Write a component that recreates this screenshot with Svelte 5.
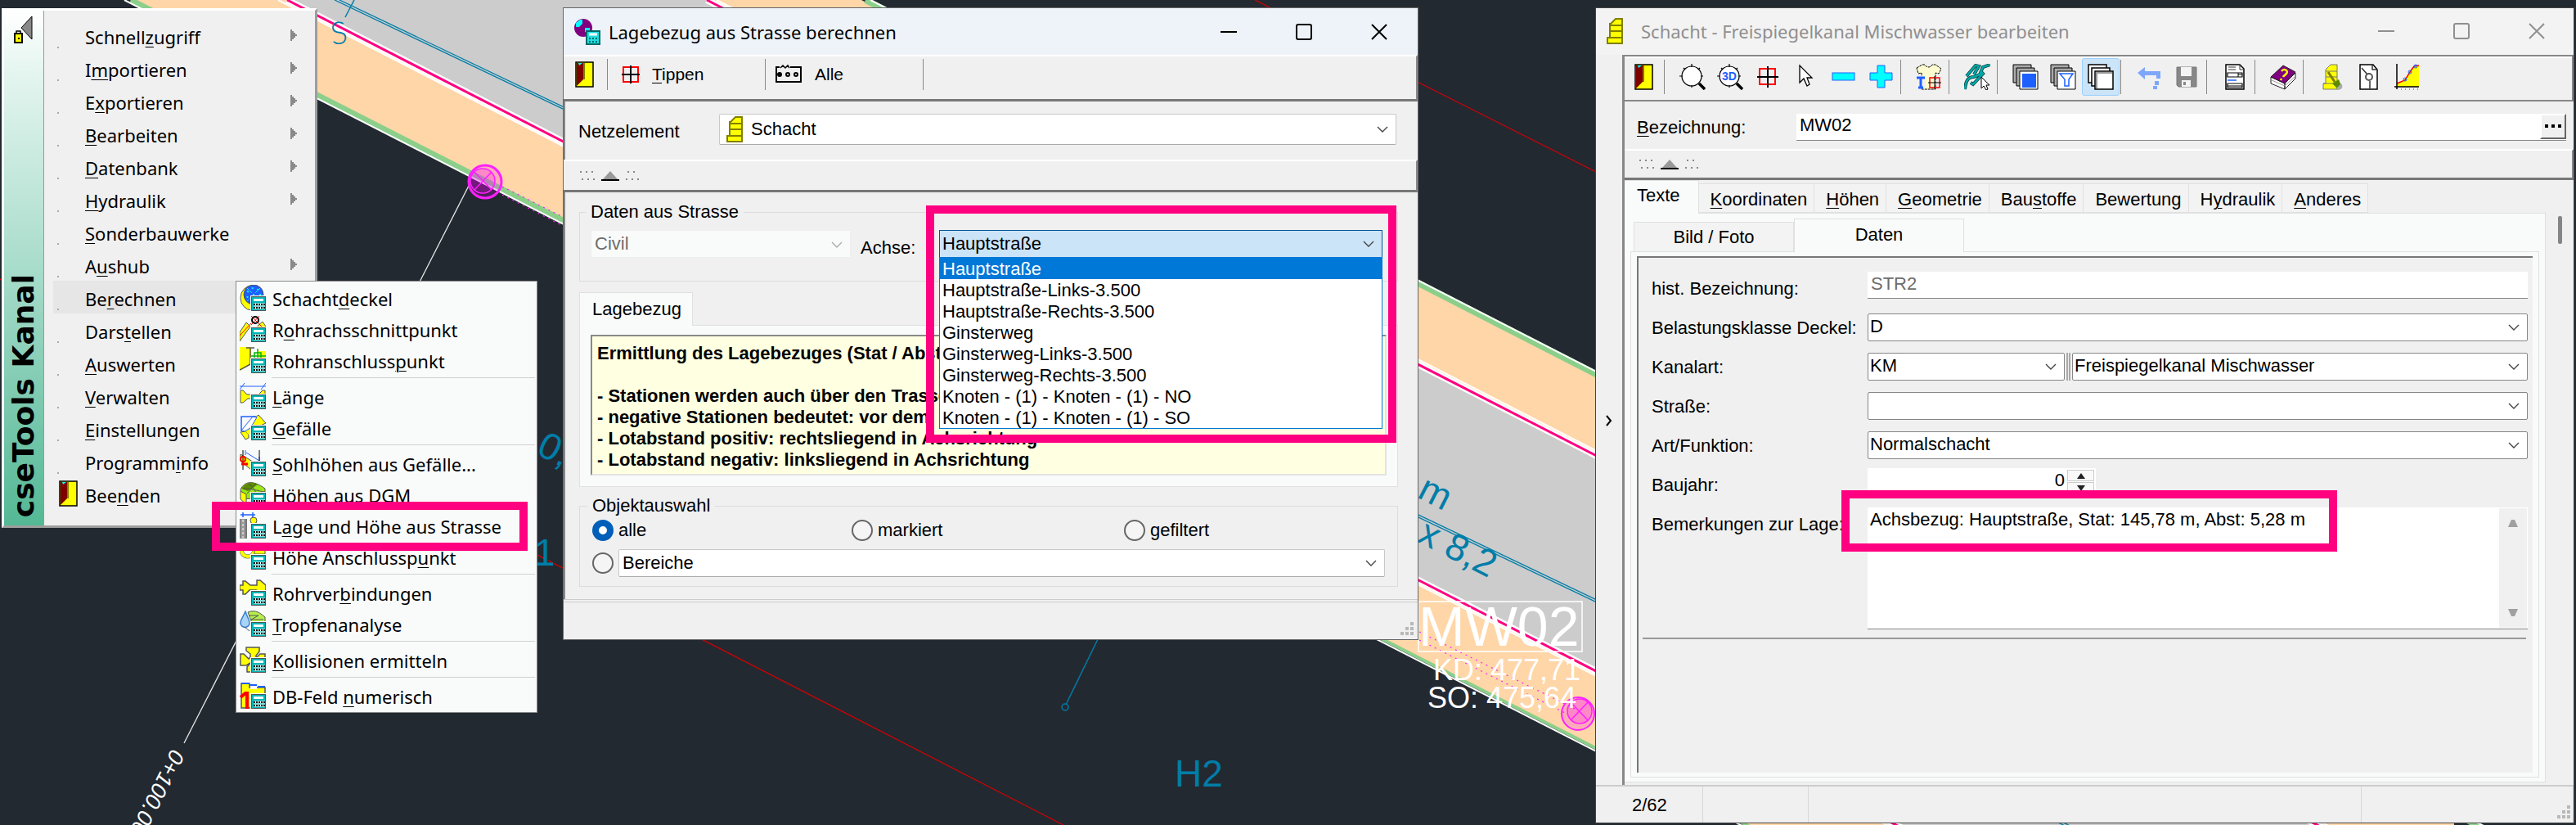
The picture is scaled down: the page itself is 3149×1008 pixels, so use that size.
<script>
  const mainMenu = [
    { t: 'Schnell&zugriff', sub: true },
    { t: 'I&mportieren', sub: true },
    { t: 'E&xportieren', sub: true },
    { t: '&Bearbeiten', sub: true },
    { t: '&Datenbank', sub: true },
    { t: '&Hydraulik', sub: true },
    { t: '&Sonderbauwerke' },
    { t: 'A&ushub', sub: true },
    { t: 'Be&rechnen', active: true },
    { t: 'Dars&tellen' },
    { t: '&Auswerten' },
    { t: '&Verwalten' },
    { t: '&Einstellungen' },
    { t: 'Programm&info' },
    { t: 'Bee&nden', icon: 'door' }
  ];

  const subMenu = [
    { t: 'Schacht&deckel', icon: 'cover' },
    { t: 'R&ohrachsschnittpunkt', icon: 'axis' },
    { t: 'Rohranschluss&punkt', icon: 'joint' },
    null,
    { t: '&Länge', icon: 'length' },
    { t: '&Gefälle', icon: 'slope' },
    null,
    { t: '&Sohlhöhen aus Gefälle...', icon: 'invert' },
    { t: 'Höhen aus DGM', icon: 'terrain' },
    { t: 'L&age und Höhe aus Strasse', icon: 'road' },
    { t: 'Höhe Anschlussp&unkt', icon: 'ring' },
    null,
    { t: 'Rohrver&bindungen', icon: 'pipes' },
    { t: '&Tropfenanalyse', icon: 'drop' },
    null,
    { t: '&Kollisionen ermitteln', icon: 'cross' },
    null,
    { t: 'DB-Feld &numerisch', icon: 'field' }
  ];

  const axes = [
    'Hauptstraße',
    'Hauptstraße-Links-3.500',
    'Hauptstraße-Rechts-3.500',
    'Ginsterweg',
    'Ginsterweg-Links-3.500',
    'Ginsterweg-Rechts-3.500',
    'Knoten - (1) - Knoten - (1) - NO',
    'Knoten - (1) - Knoten - (1) - SO'
  ];

  const tools = [
    ['door', 'Beenden'], null,
    ['zoom', 'Zoom'], ['zoom3d', 'Zoom 3D'], ['target', 'Zentrieren'], ['cursor', 'Auswählen'],
    ['minus', 'Entfernen'], ['plus', 'Hinzufügen'], null,
    ['shirt', 'Beschriftung'], null,
    ['link', 'Verknüpfen'], null,
    ['stackBlue', 'Alle Objekte'], ['stackFilter', 'Gefilterte Objekte'], ['stack', 'Einzelobjekt'], null,
    ['undo', 'Rückgängig'], ['disk', 'Speichern'], null,
    ['report', 'Bericht'], null,
    ['book', 'Hilfe'], null,
    ['brush', 'Schacht darstellen'], ['sheet', 'Schachtblatt'], ['chart', 'Diagramm']
  ];

  const tabs = ['Texte', '&Koordinaten', '&Höhen', '&Geometrie', 'Bau&stoffe', 'Bewertung', 'H&ydraulik', '&Anderes'];
</script>

{#snippet mn(text)}{@const i = text.indexOf('&')}{#if i < 0}{text}{:else}{text.slice(0, i)}<u>{text[i + 1]}</u>{text.slice(i + 2)}{/if}{/snippet}

{#snippet calc()}
  <rect x="13" y="13" width="19" height="19" fill="#fff" />
  <rect x="14" y="14" width="18" height="18" fill="#555" />
  <rect x="15" y="15" width="16" height="16" fill="#00b4b4" />
  <rect x="17" y="17" width="12" height="3" fill="#fff" />
  <path d="M17 24h14M17 28h14" stroke="#fff" stroke-width="3" />
  <path d="M17 24h14M17 28h14" stroke="#111" stroke-width="2" stroke-dasharray="2 1" />
{/snippet}

{#snippet icon(name)}
  <svg class="ico" viewBox="0 0 32 32" aria-hidden="true">
    {#if name === 'door'}
      <rect x="5" y="1" width="21" height="30" fill="#ff0" stroke="#000" stroke-width="1.5" />
      <path d="M6 2h8v20l-8 8z" fill="#800000" />
      <path d="M8 2h5l-4 3z" fill="#0ff" />
      <path d="M15 2v20" stroke="#000" />
    {:else if name === 'cover'}
      <ellipse cx="15" cy="16" rx="14" ry="15" fill="#ff0" stroke="#555" />
      <circle cx="17" cy="12" r="12" fill="#1e60ff" stroke="#555" />
      <path d="M9 4l16 16M25 4L9 20" stroke="#0ff" stroke-dasharray="3 2" />
      <circle cx="17" cy="12" r="8" fill="none" stroke="#0ff" stroke-width="2" stroke-dasharray="2 5" />
      {@render calc()}
    {:else if name === 'axis'}
      <path d="M0 20L8 8l5 5L0 31zM22 12l6-5 4 6v4h-8z" fill="#ff0" stroke="#555" />
      <path d="M0 24L14 9M14 0l14 14M24 0L14 11" stroke="red" fill="none" />
      <circle cx="19" cy="5" r="4" fill="none" stroke="#000" stroke-width="2" />
      {@render calc()}
    {:else if name === 'joint'}
      <path d="M0 0h14v21L0 29z" fill="#ff0" />
      <path d="M8 1h10M13 1v20L0 28" fill="none" stroke="#555" stroke-width="1.5" />
      <path d="M23 5h9v9h-9z" fill="#ff0" />
      <path d="M14 11h18M22 2v14M18 7h8v7h-8z" fill="none" stroke="#00b400" stroke-width="1.5" />
      {@render calc()}
    {:else if name === 'length'}
      <path d="M0 4h32M0 8l6-8M26 8l6-8" stroke="#1e60ff" fill="none" />
      <path d="M1 9h3l5 5h14l5-5h3v10H10l-6 5H1z" fill="#ff0" stroke="#555" />
      {@render calc()}
    {:else if name === 'slope'}
      <path d="M19 4l4-3 9 10-9 4h-5zM1 22l6-1 4 4v4l-4 2z" fill="#ff0" stroke="#555" />
      <path d="M6 20L21 6l4 9-14 10z" fill="#ff0" />
      <path d="M2 20L16 3l5 1-8 13-7 4z" fill="#fff" stroke="#1e60ff" />
      <path d="M2 21V3h18" stroke="#1e60ff" stroke-width="1.5" fill="none" />
      {@render calc()}
    {:else if name === 'invert'}
      <path d="M1 5l20 12-7 7L1 13z" fill="#ff0" stroke="#555" />
      <path d="M8 3l16 10M7 0v6M24 8v6" stroke="#1e60ff" fill="none" />
      <path d="M4 0v24M24 0v14" stroke="#000" />
      <circle cx="4" cy="11" r="3" fill="none" stroke="red" stroke-width="2" />
      <path d="M2 17h8" stroke="red" stroke-width="3" />
      {@render calc()}
    {:else if name === 'terrain'}
      <path d="M1 10C6 0 16-2 31 9v12H15L4 22z" fill="#9be51a" stroke="#555" />
      <path d="M2 9C8 1 16 0 22 4L10 12z" fill="#5c8a00" />
      <path d="M1 12l7 4v12L1 22z" fill="#ff0" stroke="#555" />
      <path d="M4 9c8-1 18 3 27 4M10 3c6 3 9 8 10 12M20 3L9 15" fill="none" stroke="#555" />
      {@render calc()}
    {:else if name === 'road'}
      <path d="M1 3h18M4 0v6M16 0v6" stroke="#1e60ff" stroke-width="1.5" />
      <rect y="8" width="9" height="24" fill="#999" />
      <path d="M0 8v24M8 8v24" stroke="#555" />
      <path d="M4 9v22" stroke="#fff" stroke-dasharray="3 2" />
      <circle cx="17" cy="10" r="4" fill="#ff0" stroke="#555" />
      {@render calc()}
    {:else if name === 'ring'}
      <circle cx="10" cy="8" r="8" fill="none" stroke="#555" stroke-width="5" />
      <circle cx="10" cy="8" r="8" fill="none" stroke="#ff0" stroke-width="4" />
      <path d="M18 4h13v9H18z" fill="#ff0" stroke="#555" />
      {@render calc()}
    {:else if name === 'pipes'}
      <path d="M0 7h4V2h3l6 5h8V1h4l7 6v8h-7l-5-2H12l-5 5H4v-5H0z" fill="#ff0" stroke="#555" stroke-width="1.5" />
      {@render calc()}
    {:else if name === 'drop'}
      <path d="M10 2c10-4 16 2 21 6v7H15z" fill="#b6f04a" stroke="#555" />
      <path d="M11 6h12l-9 5h15" fill="none" stroke="#555" />
      <path d="M7 1C4 8 1 11 1 15a5 5 0 0 0 11 0C12 11 9 8 7 1z" fill="#a8d4f8" stroke="#3a80d0" stroke-width="1.5" />
      <path d="M6 20l6 5" stroke="#555" />
      {@render calc()}
    {:else if name === 'cross'}
      <path d="M8 1h16v5l-4 5v3l5-5h6v14h-6l-5 2v6H9v-6l4-5-5 3H1V9h4l6 6 2-2V9L8 5z" fill="#ff0" stroke="#555" stroke-width="1.5" />
      {@render calc()}
    {:else if name === 'field'}
      <path d="M2 1h10v5h19v10h-8v15H2z" fill="#ff0" stroke="#555" stroke-width="1.5" />
      <path d="M2 1h10M12 3h9M22 5h9" stroke="#1e60ff" stroke-width="2" />
      <path d="M13 5h8v3h-8z" fill="#fff" />
      <path d="M1 18l6-5h2v19" fill="none" stroke="red" stroke-width="4" />
      {@render calc()}
    {:else if name === 'world'}
      <circle cx="11" cy="11" r="11" fill="#800080" />
      <path d="M2 10V5l5-4h3v5l-4 4zM13 11h6v5h-6z" fill="#0ff" />
      <rect x="14" y="14" width="18" height="18" fill="#006a6a" />
      <rect x="16" y="16" width="14" height="14" fill="#20dede" />
      <path d="M18 19h10" stroke="#fff" stroke-width="3" />
      <path d="M18 24h10M18 28h10" stroke="#006a6a" stroke-width="2" stroke-dasharray="2 2" />
    {:else if name === 'shaft'}
      <path d="M10 7l6-6h8v30H6v-7h3V7z" fill="#ff0" stroke="#808000" stroke-width="2" />
      <path d="M10 9h13M9 16h14M7 24h17" stroke="#808000" stroke-width="2" />
    {:else if name === 'tap'}
      <rect x="7" y="7" width="18" height="18" fill="none" stroke="red" stroke-width="2" />
      <path d="M16 5v22M5 16h22" stroke="#000" stroke-width="2" />
    {:else if name === 'all'}
      <path d="M5 7H1v18h30V7H18" fill="none" stroke="#000" stroke-width="2" />
      <path d="M6 8l3-3 3 3 3-3 2 3" fill="none" stroke="#000" stroke-width="1.5" />
      <circle cx="5" cy="16" r="3" />
      <circle cx="15" cy="16" r="2" fill="none" stroke="#000" stroke-width="2" />
      <circle cx="25" cy="16" r="2" fill="none" stroke="#000" stroke-width="2" />
    {:else if name === 'zoom' || name === 'zoom3d'}
      <circle cx="15" cy="15" r="12" fill="#fff" stroke="#000" stroke-width="1.2" />
      <path d="M15 0v4M0 15h4M26 15h3M15 26v3M5 5l2 2M25 5l-2 2" stroke="#000" stroke-width="1.2" />
      <path d="M24 24l7 7" stroke="#000" stroke-width="3.5" />
      {#if name === 'zoom3d'}<text x="6" y="20" class="t3d">3D</text>{/if}
    {:else if name === 'target'}
      <rect x="6" y="6" width="19" height="19" fill="none" stroke="red" stroke-width="2" />
      <path d="M16 3v26M3 16h26" stroke="#000" stroke-width="2" />
    {:else if name === 'cursor'}
      <path d="M9 2v21l5-5 4 9 3-2-3-8h6z" fill="#fff" stroke="#000" stroke-width="1.3" />
    {:else if name === 'minus'}
      <rect x="3" y="11" width="27" height="9" fill="#0ff" stroke="#1e60ff" />
    {:else if name === 'plus'}
      <path d="M12 2h9v9h9v9h-9v9h-9v-9H3v-9h9z" fill="#0ff" stroke="#1e60ff" />
    {:else if name === 'shirt'}
      <path d="M1 5L8 1h3c2 4 7 4 9 0h4l7 5-3 6-4-1v20H7V11l-4 1z" fill="#fdfbd0" stroke="#000" stroke-dasharray="3 1" />
      <path d="M0 15h12v14H0z" fill="#f0f0f0" />
      <path d="M1 17h10M6 16v13M3 29h6" stroke="#1e60ff" stroke-width="3" />
      <path d="M17 17h12v12H17z" fill="none" stroke="red" stroke-width="1.5" />
      <path d="M23 15v16M15 23h16" stroke="#000" />
    {:else if name === 'link'}
      <path d="M1 31c1-9 3-15 11-15l7-3 4-9 9-3M3 15L14 2l4 1-6 10M20 9l3 3-12 13-3-2" fill="none" stroke="#003c3c" stroke-width="4" />
      <path d="M1 31c1-9 3-15 11-15l7-3 4-9 9-3M3 15L14 2l4 1-6 10M20 9l3 3-12 13-3-2" fill="none" stroke="#00a8a8" stroke-width="2.5" />
      <path d="M21 16v14l3-3 3 5 2-1-2-5h4z" fill="#fff" stroke="#000" />
    {:else if name === 'stackBlue' || name === 'stackFilter'}
      <path d="M1 1h22v22H1z" fill="#aaa" stroke="#000" />
      <path d="M5 5h22v22H5z" fill="#aaa" stroke="#000" />
      <path d="M9 9h22v22H9z" fill="#fff" stroke="#000" />
      {#if name === 'stackBlue'}
        <rect x="12" y="12" width="17" height="17" fill="#1e60ff" />
      {:else}
        <path d="M12 12h16l-5 7v8h-5v-8z" fill="#fff" stroke="#1e60ff" stroke-width="1.5" />
      {/if}
    {:else if name === 'stack'}
      <path d="M1 1h22v22H1z" fill="#fff" stroke="#000" stroke-width="1.5" />
      <path d="M5 5h22v22H5z" fill="#fff" stroke="#000" stroke-width="1.5" />
      <path d="M9 9h22v22H9z" fill="#fff" stroke="#000" stroke-width="1.5" />
      <path d="M11 30V11h19" fill="none" stroke="#999" stroke-width="2" />
    {:else if name === 'undo'}
      <path d="M2 11l9-7v5h19v9h-5v-4H11v5z" fill="#7ea6fb" />
      <path d="M23 21h5v5h-5zM21 27h5v4h-5z" fill="#7ea6fb" />
    {:else if name === 'disk'}
      <path d="M4 4h24v24H6l-2-2z" fill="#888" stroke="#777" />
      <path d="M9 4h13v11H9zM10 20h11v8H10z" fill="#f4f4f4" />
      <path d="M12 22h3v4h-3z" fill="#888" />
    {:else if name === 'report'}
      <path d="M5 1h17l5 5v25H5z" fill="#fff" stroke="#000" stroke-width="1.5" />
      <path d="M22 1v6h5M8 4h9M8 7h9" fill="none" stroke="#333" />
      <path d="M7 11h18v5H7zM7 24h18v5H7z" fill="#fff" stroke="#000" stroke-width="1.2" />
      <path d="M20 11v5M20 13h5M7 27h18" stroke="#000" />
      <path d="M7 20h11" stroke="#1e60ff" stroke-width="1.5" />
    {:else if name === 'book'}
      <path d="M1 16l17 8v7L1 24zM18 24L31 11v7L18 31z" fill="#fff" stroke="#222" />
      <path d="M2 20l16 7 13-12" fill="none" stroke="#999" />
      <path d="M16 2l15 8-13 14L1 16z" fill="#800080" stroke="#222" />
      <path d="M14 9c3-4 9-1 6 3-2 2-3 2-4 4M14 18l-1 2" fill="none" stroke="#ff0" stroke-width="2.5" />
    {:else if name === 'brush'}
      <path d="M9 7l6-6h8v30H6v-7h3z" fill="#ff0" stroke="#777" />
      <path d="M9 9h14M9 16h14M6 24h16" stroke="#777" />
      <path d="M12 10l8 12" stroke="#808000" stroke-width="3" />
      <path d="M17 24l8-5 3 8-4 4z" fill="#5c8a00" />
      <path d="M23 29l5-5c3 4 1 8-5 8z" fill="#aaa" />
    {:else if name === 'sheet'}
      <path d="M5 1h16l5 6v24H5z" fill="#fff" stroke="#000" stroke-width="1.5" />
      <path d="M20 1v6h6M7 5l7 8M17 21v9" fill="none" stroke="#333" stroke-width="1.5" />
      <circle cx="16" cy="16" r="4" fill="none" stroke="#555" stroke-width="2" />
    {:else if name === 'chart'}
      <path d="M4 24l8-3 7-11 5-7 7-2v27H4z" fill="#ff0" />
      <path d="M4 24l10-4 6-10 5-7 6-1" fill="none" stroke="red" stroke-width="1.5" />
      <path d="M4 0v31M1 28h30" stroke="#000" stroke-width="1.5" />
      <path d="M9 31h22" stroke="#999" stroke-width="2" stroke-dasharray="1 4" />
      <circle cx="14" cy="19" r="2" fill="none" stroke="#1e60ff" />
      <circle cx="20" cy="10" r="2" fill="none" stroke="#1e60ff" />
      <circle cx="27" cy="3" r="2" fill="none" stroke="#1e60ff" />
    {/if}
  </svg>
{/snippet}

{#snippet chevron()}
  <svg class="chev" viewBox="0 0 14 9" aria-hidden="true"><path d="M1 1l6 6 6-6" fill="none" stroke="currentColor" stroke-width="1.4" /></svg>
{/snippet}

{#snippet combo(id, value, cls = '', disabled = false)}
  <span class="combo {cls}">
    <select {id} {disabled} aria-label={id}><option>{value}</option></select>
    {@render chevron()}
  </span>
{/snippet}

{#snippet caption()}
  <div class="caption">
    <button aria-label="Minimieren"><svg viewBox="0 0 20 20"><path d="M0 10h20" /></svg></button>
    <button aria-label="Maximieren"><svg viewBox="0 0 20 20"><rect x="1" y="1" width="18" height="18" rx="2" /></svg></button>
    <button aria-label="Schließen"><svg viewBox="0 0 20 20"><path d="M1 1l18 18M19 1L1 19" /></svg></button>
  </div>
{/snippet}

{#snippet grip()}
  <div class="gripbar">
    <svg viewBox="0 0 72 12" aria-hidden="true">
      <path d="M0 1h16M2 10h16M58 1h14M56 10h16" stroke="#888" stroke-width="2" stroke-dasharray="2 5" />
      <path d="M37 0l9 10H28z" fill="#999" />
      <path d="M26 11h22" stroke="#000" stroke-width="2" />
    </svg>
  </div>
{/snippet}

{#snippet sizer()}
  <svg class="sizer" viewBox="0 0 17 17" aria-hidden="true"><path d="M12 0h4v4h-4zM6 6h4v4H6zM12 6h4v4h-4zM0 12h4v4H0zM6 12h4v4H6zM12 12h4v4h-4z" fill="#b8b8b8" /></svg>
{/snippet}

<main class="desktop">
  <svg class="map" viewBox="0 0 3149 1008" preserveAspectRatio="xMinYMin slice" aria-label="Lageplan">
    <rect width="3149" height="1008" fill="#232931" />
    <path d="M159 0H1053L3000 998V1450L159 0z" fill="#ffd6a8" />
    <path d="M353 0H864L3000 1095V1358z" fill="#ccc" />
    <path d="M160 0L1688 779" stroke="#8bcf8b" stroke-width="7" />
    <path d="M1688 780L3149 1525" stroke="#8bcf8b" stroke-width="4" />
    <path d="M152 0L3149 1529" stroke="#fff" stroke-width="2" />
    <path d="M1058 0L3149 1070" stroke="#8bcf8b" stroke-width="8" />
    <path d="M1064 0L3149 1067" stroke="#fff" stroke-width="2" />
    <path d="M351 0L3149 1434" stroke="#fff" stroke-width="8" />
    <path d="M351 0L3149 1434" stroke="#ff0080" stroke-width="3" />
    <path d="M340 0L3149 1440" stroke="#fff" stroke-width="2" />
    <path d="M864 0L3149 1170" stroke="#fff" stroke-width="8" />
    <path d="M864 0L3149 1170" stroke="#ff0080" stroke-width="3" />
    <path d="M876 0L3149 1164" stroke="#fff" stroke-width="2" />
    <path d="M409 0L3149 1307M415 0L3149 1304" stroke="#007da8" stroke-width="1.3" />
    <path d="M433 0L422 21" stroke="#007da8" stroke-width="1.5" />
    <path d="M1534 0L1951 210M0 341L1300 1008" stroke="#d40000" stroke-width="1.3" />
    <path d="M574 225L225 908" stroke="#e8e8e8" stroke-width="1.3" />
    <path d="M1342 781L1303 861" stroke="#007da8" stroke-width="1.5" />
    <circle cx="1302" cy="864" r="4" fill="none" stroke="#007da8" stroke-width="1.5" />
    <path d="M614 228L690 266M614 238L690 277M1735 772L1929 868M1735 782L1915 872" stroke="#ff20ff" stroke-width="1.2" stroke-dasharray="2 5" />
    <g fill="#ff00ff" fill-opacity="0.2" stroke="#ff20ff">
      <circle cx="593" cy="222" r="20" stroke-width="3" />
      <circle cx="590" cy="221" r="15" stroke-width="1.5" />
      <path d="M580 210l21 22M601 210l-21 22" stroke-width="1.5" />
      <circle cx="1929" cy="872" r="20" stroke-width="2" />
      <circle cx="1931" cy="869" r="15" stroke-width="1.5" />
      <path d="M1920 858l21 22M1941 858l-21 22" stroke-width="1.5" />
    </g>
    <g fill="#007da8" font-size="46">
      <text transform="translate(406 55) rotate(-8)" font-size="38" font-family="Lato" font-weight="300">S</text>
      <text transform="translate(654 554) rotate(27)">0,</text>
      <text x="653" y="691">1</text>
      <text transform="translate(1731 607) rotate(27)">m</text>
      <text transform="translate(1731 661) rotate(27)">x 8,2</text>
      <text x="1436" y="961">H2</text>
    </g>
    <g fill="#fff">
      <rect x="1734" y="735" width="200" height="61" fill="none" stroke="#fff" stroke-width="1.5" />
      <text x="1734" y="789" font-size="68">MW02</text>
      <text x="1752" y="831" font-size="36">KD: 477,71</text>
      <text x="1745" y="865" font-size="36">SO: 475,64</text>
      <text transform="translate(210 914) rotate(117)" font-size="27" font-style="italic">0+100.00</text>
    </g>
  </svg>

  <nav class="mainmenu">
    <div class="strip">
      <svg class="lock" viewBox="0 0 24 34" aria-hidden="true">
        <path d="M22 1v28L9 15z" fill="#888" stroke="#000" />
        <path d="M3 22v-3h5v3" fill="none" stroke="#000" stroke-width="1.5" />
        <rect x="1" y="22" width="9" height="11" fill="#ff0" stroke="#000" stroke-width="2" />
        <rect x="5" y="27" width="2" height="2" />
      </svg>
      <span class="brand">cseTools Kanal</span>
    </div>
    <ul>
      {#each mainMenu as m}
        <li>
          <button class="mrow" class:active={m.active}>
            <span class="slot">{#if m.icon}{@render icon(m.icon)}{:else}<i class="dot"></i>{/if}</span>
            <span class="mtext">{@render mn(m.t)}</span>
            {#if m.sub}
              <svg class="arrow" viewBox="0 0 8 14" aria-hidden="true"><path d="M1 0v14M3 2v10M5 4v6M7 6v2" stroke="#222" /></svg>
            {/if}
          </button>
        </li>
      {/each}
    </ul>
  </nav>

  <section class="dialog">
    <header class="title">
      {@render icon('world')}
      <h1>Lagebezug aus Strasse berechnen</h1>
      {@render caption()}
    </header>
    <div class="dtools">
      <button class="dexit" aria-label="Beenden">{@render icon('door')}</button>
      <button class="dbtn">{@render icon('tap')}<span>{@render mn('&Tippen')}</span></button>
      <button class="dbtn wide">{@render icon('all')}<span>Alle</span></button>
      <i class="dsep"></i>
    </div>
    <div class="netz">
      <label for="Netzelement">Netzelement</label>
      <div class="netzbox">
        {@render combo('Netzelement', 'Schacht', 'soft lead')}
        <span class="netzicon">{@render icon('shaft')}</span>
      </div>
    </div>
    {@render grip()}
    <div class="dbody">
      <fieldset class="street">
        <legend>Daten aus Strasse</legend>
        <div class="srow">
          {@render combo('Quelle', 'Civil', 'off', true)}
          <label for="Achse">Achse:</label>
          <div class="axis">
            {@render combo('Achse', 'Hauptstraße', 'open')}
            <ul role="listbox">
              {#each axes as a, i}
                <li role="option" aria-selected={i === 0} class:sel={i === 0}>{a}</li>
              {/each}
            </ul>
          </div>
        </div>
      </fieldset>
      <div class="ltab"><button>Lagebezug</button></div>
      <div class="lpanel">
        <div class="note">
          <p>Ermittlung des Lagebezuges (Stat / Abst)</p>
          <p>&nbsp;</p>
          <p>- Stationen werden auch über den Trasse</p>
          <p>- negative Stationen bedeutet: vor dem</p>
          <p>- Lotabstand positiv: rechtsliegend in Achsrichtung</p>
          <p>- Lotabstand negativ: linksliegend in Achsrichtung</p>
        </div>
      </div>
      <fieldset class="objects">
        <legend>Objektauswahl</legend>
        <div class="radios">
          <label><input type="radio" name="obj" checked />alle</label>
          <label><input type="radio" name="obj" />markiert</label>
          <label><input type="radio" name="obj" />gefiltert</label>
        </div>
        <div class="range">
          <input type="radio" name="obj" aria-label="Bereiche" />
          {@render combo('Bereich', 'Bereiche', 'soft')}
        </div>
      </fieldset>
    </div>
    <footer class="dfoot">{@render sizer()}</footer>
    <div class="mark m-axis"></div>
  </section>

  <nav class="submenu">
    {#each subMenu as s}
      {#if s}
        <button class="srowm">{@render icon(s.icon)}<span>{@render mn(s.t)}</span></button>
      {:else}
        <hr />
      {/if}
    {/each}
    <div class="mark m-menu"></div>
  </nav>

  <section class="editor">
    <header class="title dim">
      {@render icon('shaft')}
      <h1>Schacht - Freispiegelkanal Mischwasser bearbeiten</h1>
      {@render caption()}
    </header>
    <div class="ebody">
      <button class="gutter" aria-label="Aufklappen"><svg viewBox="0 0 8 14"><path d="M1 1l5 6-5 6" fill="none" stroke="#000" stroke-width="2" /></svg></button>
      <div class="emain">
        <div class="etools">
          {#each tools as t}
            {#if t}
              <button class:on={t[0] === 'stack'} aria-label={t[1]}>{@render icon(t[0])}</button>
            {:else}
              <i></i>
            {/if}
          {/each}
        </div>
        <div class="bez">
          <label for="bez">{@render mn('&Bezeichnung:')}</label>
          <div class="bezbox"><input id="bez" value="MW02" /><button aria-label="Auswählen"><i></i><i></i><i></i></button></div>
        </div>
        {@render grip()}
        <div class="tabarea">
          <div class="tabcol">
            <div class="tabs" role="tablist">
              {#each tabs as t, i}
                <button role="tab" aria-selected={i === 0} class:cur={i === 0}>{@render mn(t)}</button>
              {/each}
            </div>
            <div class="tabbody">
              <div class="subtabs" role="tablist">
                <button role="tab" aria-selected="false">Bild / Foto</button>
                <button role="tab" aria-selected="true" class="cur">Daten</button>
              </div>
              <div class="subbody">
                <div class="form">
                  <label for="hist">hist. Bezeichnung:</label>
                  <input id="hist" class="txt grey" value="STR2" />
                  <label for="Belastungsklasse">Belastungsklasse Deckel:</label>
                  {@render combo('Belastungsklasse', 'D', 'hard')}
                  <label for="Kanalart">Kanalart:</label>
                  <div class="pair">
                    {@render combo('Kanalart', 'KM', 'hard')}
                    <i></i>
                    {@render combo('Kanalart-Text', 'Freispiegelkanal Mischwasser', 'hard')}
                  </div>
                  <label for="Straße">Straße:</label>
                  {@render combo('Straße', '', 'hard')}
                  <label for="Funktion">Art/Funktion:</label>
                  {@render combo('Funktion', 'Normalschacht', 'hard')}
                  <label for="jahr">Baujahr:</label>
                  <div class="num">
                    <input id="jahr" value="0" />
                    <div class="spin">
                      <button aria-label="Mehr"><svg viewBox="0 0 10 7"><path d="M5 0l5 7H0z" fill="#222" /></svg></button>
                      <button aria-label="Weniger"><svg viewBox="0 0 10 7"><path d="M5 7l5-7H0z" fill="#222" /></svg></button>
                    </div>
                  </div>
                  <label for="lage">Bemerkungen zur Lage:</label>
                  <div class="memo">
                    <textarea id="lage">Achsbezug: Hauptstraße, Stat: 145,78 m, Abst: 5,28 m</textarea>
                    <div class="bar">
                      <svg viewBox="0 0 12 9"><path d="M4 0h4l4 9H0z" fill="#a0a0a0" /></svg>
                      <svg viewBox="0 0 12 9"><path d="M4 9h4l4-9H0z" fill="#a0a0a0" /></svg>
                    </div>
                    <div class="mark m-memo"></div>
                  </div>
                </div>
                <hr />
              </div>
            </div>
          </div>
          <div class="scroll"><i></i></div>
        </div>
      </div>
    </div>
    <footer class="status"><span class="s1">2/62</span><span class="s1b"></span><span class="s2"></span><span class="s3">{@render sizer()}</span></footer>
  </section>
</main>

<style>
  :global(body) { margin: 0; background: #232931; }
  *, *::before, *::after { box-sizing: border-box; }
  .desktop {
    position: relative; height: 100vh; min-height: 960px; overflow: hidden;
    font: 22px/26px "Liberation Sans", Arial, sans-serif; color: #000;
  }
  .desktop ul, .desktop p, h1 { margin: 0; padding: 0; list-style: none; }
  button, input, select, textarea { font: inherit; color: inherit; border: 0; padding: 0; margin: 0; background: none; border-radius: 0; outline: 0; }
  button { text-align: left; }
  u { text-decoration-thickness: 1px; text-underline-offset: 3px; }
  .map { position: absolute; inset: 0; width: 100%; height: 100%; }
  .ico { width: 32px; height: 32px; flex: none; display: block; }
  .t3d { font: bold 14px "Liberation Sans", sans-serif; fill: #1e60ff; }
  .mark { position: absolute; border: 10px solid #ff0080; pointer-events: none; z-index: 5; }

  /* main menu */
  .mainmenu {
    position: absolute; left: 2px; top: 10px; width: 386px; display: flex;
    background: #f0f0f0; border: 3px solid; border-color: #fff #9d9d9d #9d9d9d #fff;
    font-family: "Noto Sans", "Open Sans", sans-serif;
  }
  .strip {
    width: 49px; border-right: 1px solid #999; background: linear-gradient(#fff, #e4f5ef 12%, #a8dccb 50%, #54b895);
    display: flex; flex-direction: column; justify-content: space-between; align-items: center; padding: 6px 0 10px;
  }
  .lock { width: 24px; height: 34px; }
  .brand { writing-mode: vertical-rl; rotate: 180deg; font: bold 36px/40px "DejaVu Sans", sans-serif; }
  .mainmenu ul { flex: 1; padding: 10px 0 19px 11px; }
  .mrow { display: flex; align-items: center; width: 100%; height: 40px; padding-right: 22px; }
  .active { background: #e6e6e6; }
  .slot { width: 39px; height: 40px; display: flex; align-items: center; padding-left: 3px; }
  .dot { width: 2px; height: 2px; background: #aaa; margin: 30px 0 0 2px; }
  .mtext { flex: 1; padding-top: 3px; }
  .arrow { width: 8px; height: 14px; }

  .submenu {
    position: absolute; left: 288px; top: 343px; width: 369px; background: #f9fbfb;
    border: 1px solid #888; padding: 1px; font-family: "Noto Sans", "Open Sans", sans-serif;
  }
  .srowm { display: flex; align-items: center; gap: 8px; width: 100%; height: 38px; padding-left: 3px; }
  .srowm span { padding-top: 2px; }
  .submenu hr { height: 6px; margin: 0 1px 0 42px; border: 0; background: linear-gradient(#d0d0d0, #d0d0d0) 0 2px / 100% 1px no-repeat; }
  .m-menu { left: -30px; top: 269px; width: 386px; height: 60px; }

  /* windows */
  .title { display: flex; align-items: center; height: 57px; background: #edf3f8; padding: 0 37px 0 13px; }
  .title h1 { flex: 1; font: 22px/30px "Noto Sans", "Open Sans", sans-serif; padding-left: 10px; }
  .caption { display: flex; gap: 72px; }
  .caption button { width: 20px; height: 20px; }
  .caption svg { width: 20px; height: 20px; display: block; fill: none; stroke: #000; stroke-width: 2; }
  .gripbar { display: flex; align-items: center; padding-left: 20px; border-top: 2px solid #fff; border-bottom: 3px solid #777; border-right: 2px solid #888; background: #f0f0f0; }
  .gripbar svg { width: 72px; height: 12px; }
  .sizer { width: 17px; height: 17px; }

  .combo { position: relative; display: block; color: #000; }
  .combo select { appearance: none; display: block; width: 100%; height: 34px; padding: 0 30px 2px 4px; background: #fff; border: 1px solid #c8c8c8; opacity: 1; }
  .chev { position: absolute; right: 10px; top: 50%; margin-top: -4px; width: 14px; height: 9px; color: #444; pointer-events: none; }
  .hard select { border-color: #868686; border-radius: 2px; padding-left: 2px; }
  .dialog .combo select { padding-bottom: 0; }
  .soft select { border-bottom-color: #aaa; border-radius: 2px; }
  .off select { background: #f9fbfb; border-color: #eee; color: #6d6d6d; }
  .off .chev { color: #aaa; }
  .open select { background: #cce4f7; border-color: #005499; padding-left: 3px; }

  .dialog {
    position: absolute; left: 688px; top: 9px; width: 1046px; display: flex; flex-direction: column;
    background: #f0f0f0; border: 1px solid #666;
  }
  .dtools { display: flex; height: 57px; padding: 3px 0 11px 10px; border-top: 2px solid #fff; border-right: 2px solid #888; border-bottom: 3px solid #777; }
  .dexit { width: 43px; display: flex; align-items: center; }
  .dbtn { width: 193px; display: flex; align-items: center; padding-left: 12px; border-left: 1px solid #888; }
  .dbtn span { font-size: 21px; padding-left: 10px; }
  .dbtn.wide span { padding-left: 16px; }
  .dsep { width: 1px; background: #888; }
  .netz { display: flex; height: 71px; align-items: center; padding: 0 26px 3px 16px; border-left: 2px solid #888; }
  .netz label { width: 172px; padding-top: 6px; }
  .netzbox { position: relative; flex: 1; }
  .lead select { height: 38px; padding-left: 38px; }
  .netzicon { position: absolute; left: 4px; top: 3px; }
  .dialog .gripbar { height: 40px; }
  .dbody { border-left: 2px solid #888; padding: 11px 24px 15px 17px; }
  fieldset { margin: 0; border: 1px solid #dcdcdc; min-width: 0; }
  legend { padding: 0 6px; margin-left: -6px; }
  .street { padding: 9px 17px 29px 13px; height: 98px; }
  .srow { display: flex; }
  .srow > .combo { width: 318px; }
  .srow label { width: 96px; margin-left: 12px; padding: 9px 0 0; }
  .srow > .combo, .axis { flex-shrink: 0; }
  .axis { position: relative; width: 542px; z-index: 2; }
  .axis ul { position: absolute; left: 0; right: 0; top: 33px; background: #fff; border: 1px solid #0078d7; }
  .axis li { height: 26px; padding-left: 3px; line-height: 28px; }
  .axis li.sel { background: #0078d7; color: #fff; }
  .ltab { margin-top: 13px; display: flex; }
  .ltab button { height: 41px; width: 139px; padding-left: 15px; background: #f9fbfb; border: 1px solid #e0e0e0; border-bottom: 0; margin-bottom: -1px; position: relative; }
  .lpanel { background: #f9fbfb; border: 1px solid #e0e0e0; padding: 11px 13px 13px; }
  .note { background: #ffffe1; border: 2px solid; border-color: #888 #e3e3e3 #e3e3e3 #888; padding: 8px 6px 4px; font-weight: bold; overflow: hidden; }
  .note p { white-space: nowrap; }
  .objects { margin-top: 10px; padding: 4px 15px 11px 15px; }
  .radios { display: grid; grid-template-columns: 317px 333px 1fr; }
  .radios label { display: flex; align-items: center; gap: 6px; }
  input[type="radio"] { appearance: none; width: 26px; height: 26px; border: 2px solid #666; border-radius: 50%; flex: none; background: #f5f5f5; }
  input[type="radio"]:checked { border: 8px solid #005fb8; background: #fff; }
  .range { display: flex; align-items: center; gap: 6px; margin-top: 10px; }
  .range .combo { flex: 1; }
  .dfoot { height: 49px; border-top: 4px double #ccc; display: flex; align-items: flex-end; justify-content: flex-end; padding: 0 4px 4px 0; }
  .m-axis { left: 443px; top: 241px; width: 575px; height: 290px; }

  .editor {
    position: absolute; left: 1950px; right: 2px; top: 9px; bottom: 2px; display: flex; flex-direction: column;
    background: #f0f0f0; border: 1px solid #444;
  }
  .editor > .title { background: #f3f3f3; padding: 0 35px 2px 8px; color: #8f8f8f; }
  .dim .caption svg { stroke: #8f8f8f; }
  .dim h1 { padding-left: 15px; }
  .ebody { flex: 1; display: flex; min-height: 0; }
  .gutter { width: 32px; display: flex; align-items: center; justify-content: center; padding-top: 2px; }
  .gutter svg { width: 8px; height: 14px; }
  .emain { flex: 1; display: flex; flex-direction: column; border-left: 3px solid #888; min-width: 0; }
  .etools { display: flex; height: 57px; align-items: center; padding: 0 0 4px 1px; border: 2px solid #888; border-left: 0; box-shadow: inset 0 2px #fff; }
  .etools button { width: 46px; height: 46px; padding: 0 7px; }
  .etools i { width: 1px; height: 42px; background: #888; margin: 0 11px 0 1px; }
  .etools .on { background: #cce4f7; border: 1px solid #99d1ff; padding: 0 6px; border-radius: 3px; }
  .bez { display: flex; align-items: center; height: 58px; padding: 0 9px 0 15px; }
  .bez label { width: 195px; padding-top: 6px; }
  .bezbox { flex: 1; display: flex; height: 33px; background: #fff; border-bottom: 1px solid #868686; margin-top: 4px; }
  .bezbox input { flex: 1; padding-left: 4px; padding-bottom: 3px; }
  .bezbox button { width: 32px; height: 31px; background: #f0f0f0; border: 2px solid; border-color: #fff #666 #666 #fff; display: flex; align-items: center; justify-content: center; gap: 4px; }
  .bezbox i { width: 4px; height: 4px; background: #000; }
  .editor .gripbar { height: 38px; padding-left: 18px; }
  .tabarea { flex: 1; display: flex; min-height: 0; }
  .tabcol { flex: 1; display: flex; flex-direction: column; min-width: 0; }
  .tabs { display: flex; align-items: flex-end; height: 40px; position: relative; }
  .tabs button { height: 36px; background: #f3f3f3; border: 1px solid #e0e0e0; border-left: 0; padding: 4px 8px 0 14px; }
  .tabs .cur { height: 41px; margin-bottom: -1px; background: #f9fbfb; border-bottom: 0; padding: 0 22px 4px 15px; }
  .tabbody { flex: 1; background: #f9fbfb; border: 1px solid #e0e0e0; border-left: 0; padding: 5px 7px; display: flex; flex-direction: column; margin-bottom: 3px; }
  .subtabs { display: flex; align-items: flex-end; height: 41px; padding-left: 4px; }
  .subtabs button { width: 196px; height: 36px; text-align: center; background: #f3f3f3; border: 1px solid #e0e0e0; border-bottom: 0; }
  .subtabs .cur { width: 208px; height: 41px; background: #f9fbfb; margin-bottom: -1px; position: relative; padding-bottom: 2px; }
  .subbody { flex: 1; border: 1px solid #e0e0e0; padding: 5px 7px; display: flex; flex-direction: column; background: #f0f0f0; box-shadow: inset 0 0 0 7px #f9fbfb; }
  .form {
    display: grid; grid-template-columns: 264px 1fr; grid-template-rows: repeat(6, 48px) 162px; align-items: start;
    padding: 14px 6px 0 16px; background: #f0f0f0; border: 2px solid #777; border-width: 2px 0 0 2px;
  }
  .form label { line-height: 48px; }
  .form .combo { margin-top: 6px; }
  .txt { width: 100%; height: 33px; margin-top: 3px; padding: 0 4px 3px; background: #fff; border-bottom: 1px solid #868686; }
  .grey { color: #6d6d6d; }
  .pair { display: flex; gap: 2px; }
  .pair .combo:first-child { width: 241px; }
  .pair .combo:last-child { flex: 1; }
  .pair i { width: 5px; height: 34px; margin-top: 6px; border: 2px solid #aaa; border-width: 0 2px; }
  .num { display: flex; width: 279px; height: 33px; margin-top: 3px; background: #fff; padding: 2px; }
  .num input { flex: 1; min-width: 0; text-align: right; padding: 0 3px 3px 0; }
  .spin { display: flex; flex-direction: column; width: 33px; gap: 1px; }
  .spin button { flex: 1; border: 1px solid #ccc; background: #f9f9f9; display: flex; align-items: center; justify-content: center; }
  .spin svg { width: 10px; height: 7px; }
  .memo { position: relative; display: flex; height: 149px; margin-top: 3px; background: #fff; border-bottom: 1px solid #868686; }
  .memo textarea { flex: 1; resize: none; padding: 2px 3px; overflow: hidden; }
  .bar { width: 34px; margin: 1px 1px 1px 0; background: #f0f0f0; display: flex; flex-direction: column; justify-content: space-between; align-items: center; padding: 14px 0; }
  .bar svg { width: 12px; height: 9px; }
  .m-memo { left: -32px; top: -21px; width: 606px; height: 75px; }
  .subbody > hr { flex: 1; margin: 0; border: 0; border-left: 2px solid #777; background: linear-gradient(#999, #999) 5px 0 / calc(100% - 13px) 2px no-repeat #f0f0f0; }
  .scroll { width: 34px; padding: 44px 0 0 15px; }
  .scroll i { display: block; width: 5px; height: 34px; background: #858585; border-radius: 2px; }
  .status { height: 46px; display: flex; border-top: 2px solid #ccc; }
  .status span { border-right: 1px solid #d8d8d8; }
  .s1 { width: 131px; padding: 10px 0 0 44px; }
  .s1b { width: 129px; }
  .s2 { flex: 1; }
  .s3 { width: 259px; display: flex; align-items: flex-end; justify-content: flex-end; padding: 0 2px 4px 0; }
</style>
